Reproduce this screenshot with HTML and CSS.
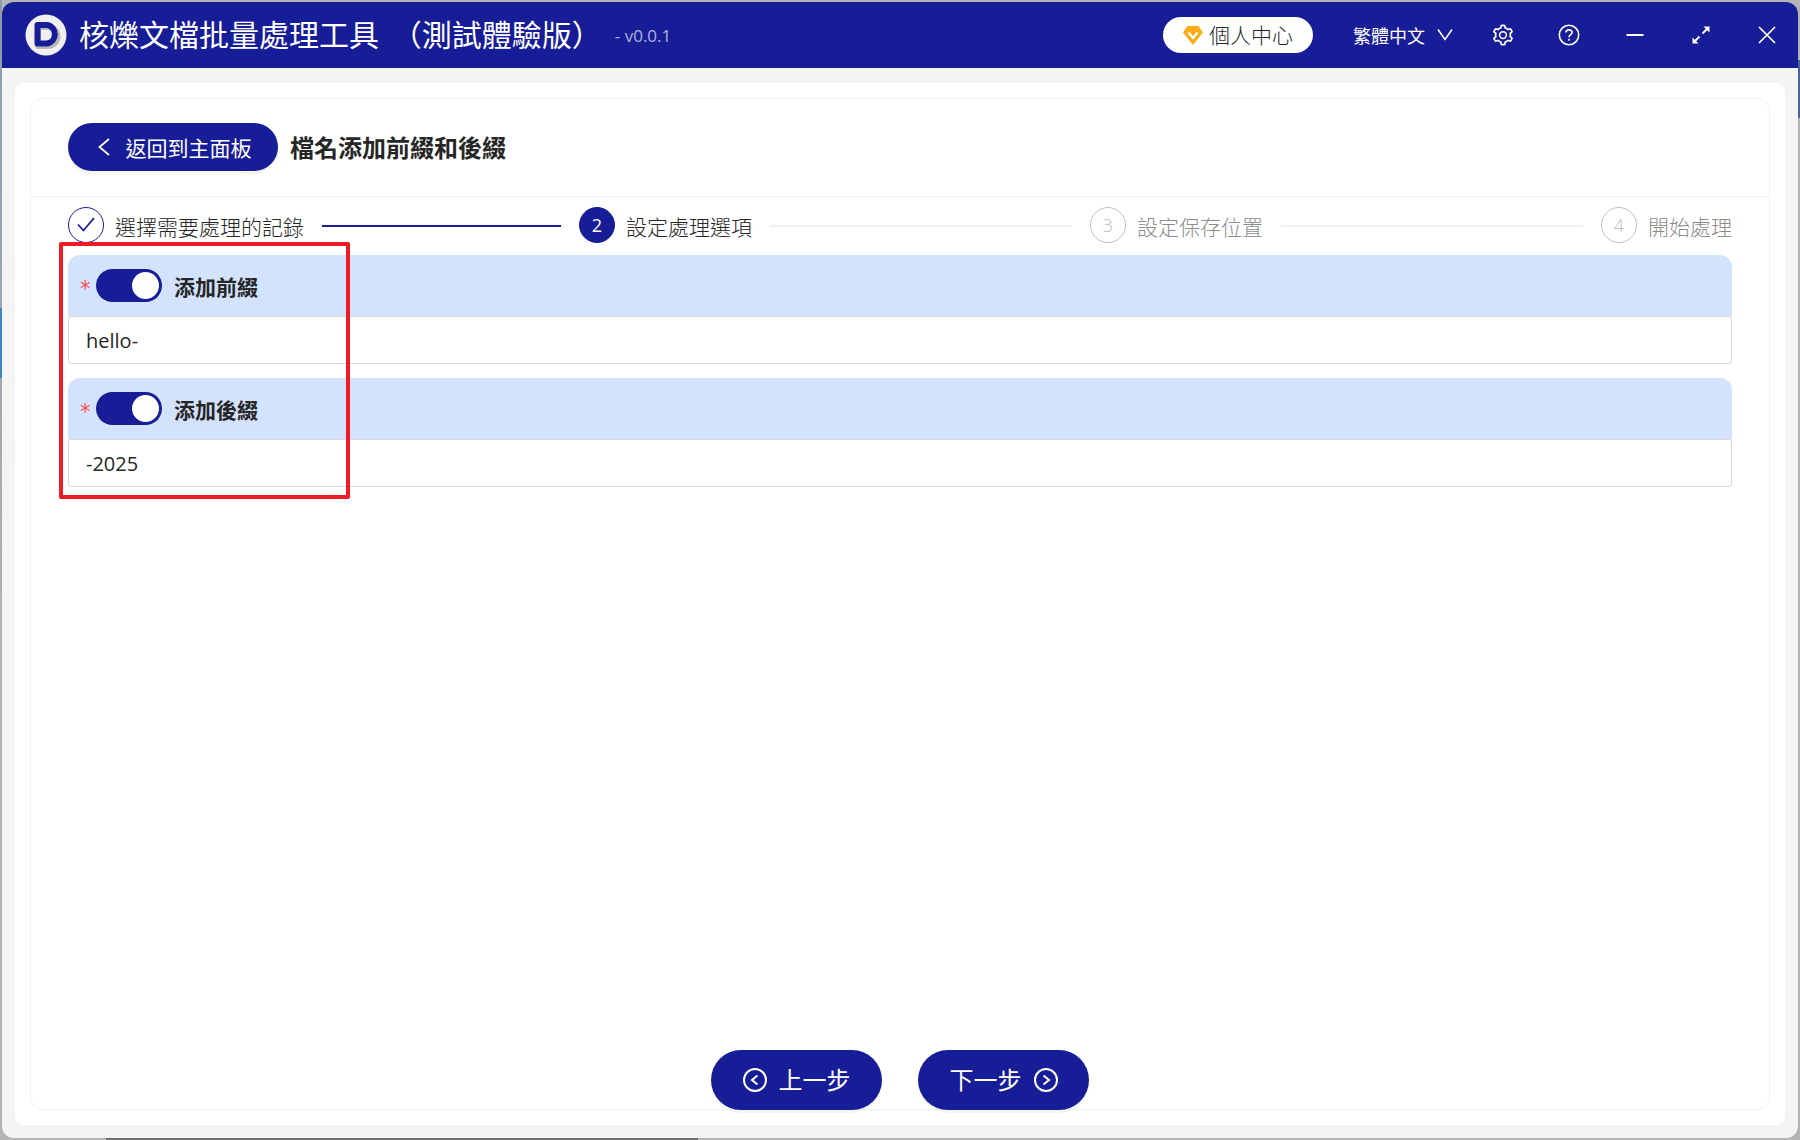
FILE: index.html
```html
<!DOCTYPE html>
<html lang="zh-Hant">
<head>
    <meta charset="UTF-8">
    <meta name="viewport" content="width=device-width, initial-scale=1.0">
    <title>核爍文檔批量處理工具</title>
    <link rel="stylesheet" href="styles.css">
</head>
<body>

<div class="window">

    <header class="titlebar">
        <svg class="logo" viewBox="0 0 42 42" aria-hidden="true">
            <circle cx="21" cy="21" r="20.5" fill="#f0f0f0"/>
            <path d="M13 13h10a9.500 9.500 0 0 1 0 19H13z" fill="none" stroke="#b8b8b8" stroke-width="6" stroke-linejoin="round"/>
            <path d="M12.500 11h10a9.500 9.500 0 0 1 0 18.500h-10z" fill="none" stroke="#171c97" stroke-width="6" stroke-linejoin="round"/>
        </svg>
        <h1>核爍文檔批量處理工具 <span class="edition">（測試體驗版）</span></h1>
        <span class="version">- v0.0.1</span>

        <div class="tools">
            <button class="account" type="button">
                <svg width="20" height="19" viewBox="0 0 20 19" aria-hidden="true">
                    <path d="M4.500 0h11L20 6.500 10 19 0 6.500z" fill="#faad14"/>
                    <path d="M5.500 6.500L10 12l4.500-5.500" fill="none" stroke="#fff" stroke-width="2.200"/>
                </svg>
                <span class="label">個人中心</span>
            </button>
            <button class="language" type="button">
                繁體中文
                <svg width="16" height="14" viewBox="0 0 16 14" aria-hidden="true">
                    <path d="M1 1.500l7 10 7-10" fill="none" stroke="#fff" stroke-width="1.500"/>
                </svg>
            </button>
            <button class="tool" type="button" aria-label="設定">
                <svg viewBox="0 0 1024 1024"><path fill="currentColor" d="M924.8 625.7l-65.500-56c3.100-19 4.700-38.400 4.700-57.800s-1.600-38.800-4.700-57.800l65.500-56a32.030 32.030 0 009.300-35.200l-.9-2.600a443.740 443.740 0 00-79.700-137.900l-1.800-2.100a32.120 32.120 0 00-35.100-9.500l-81.300 28.900c-30-24.600-63.500-44-99.700-57.600l-15.700-85a32.050 32.050 0 00-25.800-25.700l-2.700-.5c-52.100-9.400-106.900-9.400-159 0l-2.700.5a32.050 32.050 0 00-25.800 25.700l-15.800 85.400a351.860 351.860 0 00-99 57.400l-81.900-29.100a32 32 0 00-35.100 9.500l-1.800 2.100a446.020 446.020 0 00-79.700 137.900l-.9 2.600c-4.500 12.500-.8 26.500 9.300 35.200l66.300 56.600c-3.100 18.800-4.600 38-4.600 57.100 0 19.200 1.500 38.400 4.600 57.100L99 625.500a32.030 32.030 0 00-9.300 35.200l.9 2.600c18.100 50.400 44.900 96.900 79.700 137.900l1.800 2.100a32.120 32.120 0 0035.100 9.500l81.900-29.100c29.800 24.500 63.100 43.900 99 57.400l15.800 85.400a32.050 32.050 0 0025.800 25.700l2.700.5a449.400 449.400 0 00159 0l2.700-.5a32.050 32.050 0 0025.800-25.700l15.700-85a350 350 0 0099.700-57.600l81.300 28.900a32 32 0 0035.100-9.500l1.800-2.100c34.800-41.100 61.600-87.500 79.700-137.900l.9-2.600c4.500-12.300.8-26.300-9.300-35zM788.300 465.900c2.500 15.100 3.800 30.600 3.800 46.100s-1.300 31-3.800 46.100l-6.600 40.100 74.700 63.900a370.030 370.030 0 01-42.600 73.600L721 702.800l-31.400 25.800c-23.900 19.600-50.500 35-79.300 45.800l-38.100 14.300-17.900 97a377.500 377.500 0 01-85 0l-17.900-97.200-37.800-14.500c-28.500-10.800-55-26.200-78.700-45.700l-31.400-25.900-93.400 33.200c-17-22.900-31.200-47.600-42.600-73.600l75.500-64.500-6.500-40c-2.400-14.900-3.700-30.300-3.700-45.500 0-15.300 1.200-30.600 3.700-45.500l6.500-40-75.500-64.500c11.300-26.100 25.600-50.700 42.600-73.600l93.400 33.200 31.400-25.900c23.700-19.500 50.200-34.900 78.700-45.700l37.900-14.300 17.900-97.200c28.100-3.200 56.800-3.200 85 0l17.900 97 38.100 14.300c28.700 10.800 55.400 26.200 79.300 45.800l31.400 25.800 92.800-32.900c17 22.900 31.200 47.600 42.600 73.600L781.800 426l6.500 39.900z"/><circle cx="512" cy="512" r="144" fill="none" stroke="currentColor" stroke-width="64"/></svg>
            </button>
            <button class="tool" type="button" aria-label="說明">
                <svg viewBox="0 0 24 24" fill="none" stroke="currentColor" stroke-width="1.600">
                    <circle cx="12" cy="12" r="9.700"/>
                    <path d="M8.900 9.600c0-1.700 1.400-2.700 3.100-2.700s3.100 1.100 3.100 2.700c0 2-3.100 2.200-3.100 4.600"/>
                    <path d="M12 15.800v1.900"/>
                </svg>
            </button>
            <button class="tool" type="button" aria-label="最小化">
                <svg viewBox="0 0 24 24" stroke="currentColor" stroke-width="2"><path d="M3.500 12h17"/></svg>
            </button>
            <button class="tool" type="button" aria-label="最大化">
                <svg viewBox="0 0 24 24" fill="none" stroke="currentColor" stroke-width="1.800">
                    <path d="M13.500 10.500l5.500-5.500M10.500 13.500L5 19"/>
                    <path d="M20.500 3.500v6l-6-6zM3.500 20.500v-6l6 6z" fill="currentColor" stroke="none"/>
                </svg>
            </button>
            <button class="tool" type="button" aria-label="關閉">
                <svg viewBox="0 0 24 24" stroke="currentColor" stroke-width="1.700"><path d="M4 4l16 16M20 4L4 20"/></svg>
            </button>
        </div>
    </header>

    <main class="panel">
        <div class="card">
            <div class="card-head">
                <button class="primary back" type="button">
                    <svg width="12" height="18" viewBox="0 0 12 18" aria-hidden="true">
                        <path d="M11 1L1.500 9l9.500 8" fill="none" stroke="#fff" stroke-width="1.800"/>
                    </svg>
                    返回到主面板
                </button>
                <h2>檔名添加前綴和後綴</h2>
            </div>

            <ol class="steps">
                <li class="step done">
                    <span class="dot">
                        <svg width="18" height="16" viewBox="0 0 18 16" aria-hidden="true">
                            <path d="M1 7.500l5.500 6L17 1" fill="none" stroke="#171c97" stroke-width="1.800"/>
                        </svg>
                    </span>
                    <span class="name">選擇需要處理的記錄</span>
                </li>
                <li class="step current">
                    <span class="dot">2</span>
                    <span class="name">設定處理選項</span>
                </li>
                <li class="step">
                    <span class="dot">3</span>
                    <span class="name">設定保存位置</span>
                </li>
                <li class="step">
                    <span class="dot">4</span>
                    <span class="name">開始處理</span>
                </li>
            </ol>

            <form class="options">
                <div class="option">
                    <label class="option-head">
                        <span class="required">*</span>
                        <input class="switch" type="checkbox" checked>
                        <span>添加前綴</span>
                    </label>
                    <input class="text" type="text" value="hello-" aria-label="添加前綴">
                </div>
                <div class="option">
                    <label class="option-head">
                        <span class="required">*</span>
                        <input class="switch" type="checkbox" checked>
                        <span>添加後綴</span>
                    </label>
                    <input class="text" type="text" value="-2025" aria-label="添加後綴">
                </div>
                <div class="highlight"></div>
            </form>

            <footer class="actions">
                <button class="primary" type="button">
                    <svg width="24" height="24" viewBox="0 0 24 24" fill="none" stroke="#fff" stroke-width="2" aria-hidden="true">
                        <circle cx="12" cy="12" r="11"/>
                        <path d="M14.500 7.500L9 12l5.500 4.500"/>
                    </svg>
                    <span class="label">上一步</span>
                </button>
                <button class="primary" type="button">
                    <span class="label">下一步</span>
                    <svg width="24" height="24" viewBox="0 0 24 24" fill="none" stroke="#fff" stroke-width="2" aria-hidden="true">
                        <circle cx="12" cy="12" r="11"/>
                        <path d="M9.500 7.500L15 12l-5.500 4.500"/>
                    </svg>
                </button>
            </footer>
        </div>
    </main>

</div>

</body>
</html>
```
FILE: styles.css
```css
* {
    margin: 0;
    padding: 0;
    box-sizing: border-box;
}

/* desktop showing around the window */
body {
    display: flex;
    min-height: 100vh;
    padding: 2px;
    color: #262626;
    font-family: "Open Sans", "Noto Sans CJK TC", sans-serif;
    font-size: 21px;
    font-weight: 300;
    background:
        linear-gradient(#3b86bd, #3b86bd) 0 308px / 2px 70px no-repeat,
        linear-gradient(#4a6499, #4a6499) 100% 60px / 2px 58px no-repeat,
        linear-gradient(#8c9cab, #b0b0b0) 0 0 / 2px 600px no-repeat,
        linear-gradient(#6e6e6e, #6e6e6e) 106px 100% / 592px 2px no-repeat,
        #b4b4b4;
}

button {
    border: none;
    background: none;
    color: inherit;
    font: inherit;
    cursor: pointer;
}

.window {
    display: flex;
    flex-direction: column;
    flex: 1;
    background: #f4f4f4;
    border-radius: 12px;
    overflow: hidden;
}

.titlebar {
    display: flex;
    align-items: center;
    height: 66px;
    padding: 0 7px 0 23px;
    background: #171c97;
    color: #fff;
}

.logo {
    width: 42px;
    height: 42px;
    margin-right: 12px;
}

.titlebar h1 {
    font-size: 30px;
    font-weight: 400;
    line-height: 44px;
    white-space: nowrap;
}

.edition {
    margin-left: 5px;
}

.version {
    margin-left: 13px;
    font-size: 17px;
    font-weight: 400;
    opacity: 0.65;
}

.tools {
    display: flex;
    align-items: center;
    gap: 18px;
    margin-left: auto;
}

.account {
    display: flex;
    align-items: center;
    justify-content: center;
    gap: 6px;
    width: 150px;
    height: 36px;
    border-radius: 18px;
    background: #fff;
    color: #262626;
}

.label {
    padding-bottom: 3px;
}

.language {
    display: flex;
    align-items: center;
    gap: 12px;
    margin: 0 8px 0 22px;
    font-size: 18px;
    font-weight: 400;
}

.tool {
    display: flex;
    align-items: center;
    justify-content: center;
    width: 48px;
    height: 48px;
}

.tool svg {
    width: 24px;
    height: 24px;
}

.panel {
    display: flex;
    flex: 1;
    margin: 15px 13px 13px;
    padding: 15px;
    background: #fff;
    border-radius: 9px;
}

.card {
    display: flex;
    flex-direction: column;
    flex: 1;
    border: 1px solid #f0f0f0;
    border-radius: 12px;
}

.card-head {
    display: flex;
    align-items: center;
    gap: 12px;
    height: 98px;
    padding: 0 37px 2px;
    border-bottom: 1px solid #f0f0f0;
}

.card-head h2 {
    font-size: 24px;
    font-weight: 700;
}

.primary {
    display: flex;
    align-items: center;
    justify-content: center;
    gap: 12px;
    border-radius: 30px;
    background: #171c97;
    box-shadow: 0 3px 0 rgba(0, 0, 0, 0.04);
    color: #fff;
}

.back {
    gap: 16px;
    width: 210px;
    height: 48px;
    padding-left: 3px;
    font-weight: 400;
}

.steps {
    display: flex;
    gap: 18px;
    padding: 10px 37px 0;
    list-style: none;
}

.step {
    display: flex;
    align-items: center;
    flex: 1;
    color: #8c8c8c;
}

.step:last-child {
    flex: none;
}

.step:not(:last-child)::after {
    content: "";
    flex: 1;
    height: 2px;
    margin-left: 18px;
    background: #f0f0f0;
}

.step.done::after {
    background: #171c97;
}

.step.done,
.step.current {
    color: #262626;
}

.dot {
    display: flex;
    align-items: center;
    align-self: flex-start;
    justify-content: center;
    width: 36px;
    height: 36px;
    margin-right: 11px;
    border: 1px solid #bfbfbf;
    border-radius: 50%;
    color: #bfbfbf;
    font-size: 18px;
}

.done .dot {
    border-color: #171c97;
}

.current .dot {
    border-color: #171c97;
    background: #171c97;
    color: #fff;
    font-weight: 400;
}

.name {
    padding-top: 2px;
    line-height: 36px;
}

.options {
    position: relative;
    display: flex;
    flex-direction: column;
    gap: 14px;
    margin: 10px 37px 0;
}

.option-head {
    display: flex;
    align-items: center;
    height: 61px;
    padding-left: 11px;
    border-radius: 12px 12px 0 0;
    background: #d3e2fd;
    font-weight: 700;
}

.required {
    width: 12px;
    margin-right: 5px;
    padding-top: 6px;
    color: #ff4d4f;
    font-family: "DejaVu Sans Mono", monospace;
    font-weight: 400;
}

.switch {
    appearance: none;
    width: 66px;
    height: 33px;
    margin-right: 12px;
    padding: 3px;
    border-radius: 17px;
    background: #bfbfbf;
    cursor: pointer;
}

.switch::before {
    content: "";
    display: block;
    width: 27px;
    height: 27px;
    border-radius: 50%;
    background: #fff;
}

.switch:checked {
    background: #171c97;
}

.switch:checked::before {
    margin-left: auto;
}

.text {
    display: block;
    width: 100%;
    height: 48px;
    padding: 0 17px;
    border: 1px solid #d9d9d9;
    border-radius: 3px;
    color: #262626;
    font: inherit;
    font-size: 20px;
    font-weight: 400;
}

/* red frame drawn over the option heads */
.highlight {
    position: absolute;
    top: -13px;
    left: -9px;
    width: 291px;
    height: 257px;
    border: 4px solid #ed1c24;
    border-radius: 2px;
    pointer-events: none;
}

.actions {
    display: flex;
    justify-content: center;
    gap: 36px;
    margin-top: auto;
    margin-bottom: -1px;
}

.actions .primary {
    width: 171px;
    height: 60px;
    font-size: 24px;
    font-weight: 400;
}
```
